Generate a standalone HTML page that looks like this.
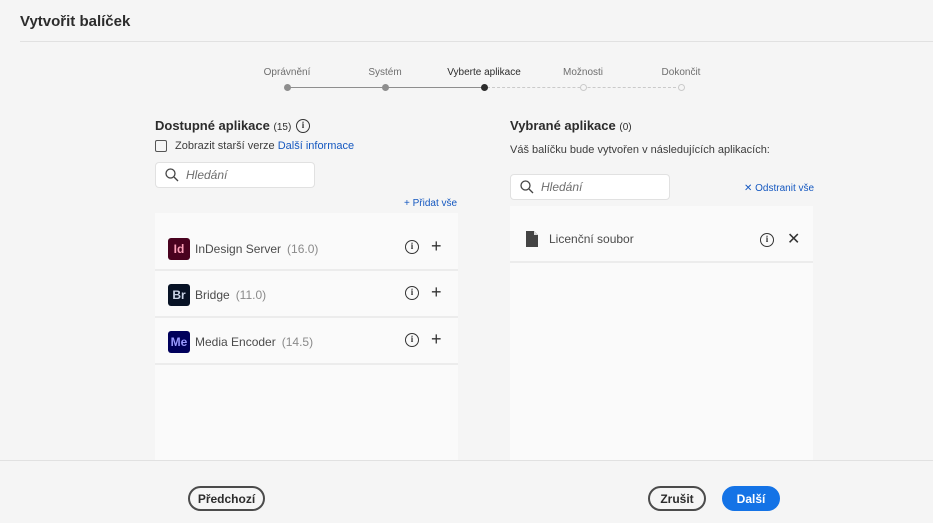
<!DOCTYPE html>
<html><head><meta charset="utf-8"><style>
*{box-sizing:border-box;margin:0;padding:0}
body{width:933px;height:523px;background:#f5f5f5;font-family:"Liberation Sans",sans-serif;color:#2c2c2c;position:relative;overflow:hidden}
.abs{position:absolute}
.t{font-size:15px;font-weight:bold;left:20px;top:13px}
.hl{left:20px;right:0;top:41px;height:1px;background:#e1e1e1}
.step{font-size:10px;color:#6e6e6e;top:67px;transform:translateX(-50%)}
.dot{width:7px;height:7px;border-radius:50%;top:84px;background:#8e8e8e}
.odot{width:7px;height:7px;border-radius:50%;top:84px;border:1px solid #cacaca;background:#f5f5f5}
.h2{font-size:13px;font-weight:bold}
.h2 span{font-weight:normal;font-size:10px}
.search{background:#fff;border:1px solid #e1e1e1;border-radius:4px;height:26px;font-style:italic;font-size:12px;color:#6e6e6e;padding-left:30px;line-height:24px}
.search svg{position:absolute;left:9px;top:5px}
.panel{background:#fafafa}
.row{position:absolute;left:0;right:0;height:46px;border-bottom:2px solid #ececec;font-size:12px;color:#4b4b4b}
.ic{position:absolute;left:13px;top:13px;width:22px;height:22px;border-radius:3px;font-weight:bold;font-size:12px;line-height:22px;text-align:center}
.nm{position:absolute;left:40px;top:17px}
.nm span{color:#8a8a8a;margin-left:6px}
.info{position:absolute;width:14px;height:14px;border:1.3px solid #333;border-radius:50%;font-size:9px;font-weight:bold;text-align:center;line-height:11px;color:#333;font-family:"Liberation Serif",serif}
.plus{position:absolute;font-size:18px;color:#333}
.link{color:#1558c0;font-size:10px}
.btn{position:absolute;top:486px;height:25px;border-radius:13px;font-size:12px;font-weight:bold;text-align:center;line-height:22px;border:2px solid #4b4b4b;color:#2c2c2c}
</style></head><body>
<div class="abs t">Vytvořit balíček</div>
<div class="abs hl"></div>
<div class="abs step" style="left:287px">Oprávnění</div>
<div class="abs step" style="left:385px">Systém</div>
<div class="abs step" style="left:484px;color:#2c2c2c">Vyberte aplikace</div>
<div class="abs step" style="left:583px">Možnosti</div>
<div class="abs step" style="left:681px">Dokončit</div>
<div class="abs" style="left:290px;top:87px;width:194px;height:1px;background:#8e8e8e"></div>
<div class="abs" style="left:487px;top:87px;width:194px;border-top:1px dashed #cacaca"></div>
<div class="abs dot" style="left:284px"></div>
<div class="abs dot" style="left:382px"></div>
<div class="abs dot" style="left:481px;background:#2c2c2c"></div>
<div class="abs odot" style="left:580px"></div>
<div class="abs odot" style="left:678px"></div>

<div class="abs h2" style="left:155px;top:118px">Dostupné aplikace <span>(15)</span></div>
<div class="abs info" style="left:296px;top:119px">i</div>
<div class="abs" style="left:155px;top:140px;width:12px;height:12px;border:1.5px solid #555;border-radius:2px"></div>
<div class="abs" style="left:175px;top:140px;font-size:11px;color:#3c3c3c">Zobrazit starší verze <span class="link" style="font-size:11px">Další informace</span></div>
<div class="abs search" style="left:155px;top:162px;width:160px">Hledání<svg width="14" height="14" viewBox="0 0 14 14"><circle cx="5.5" cy="5.5" r="4.5" fill="none" stroke="#444" stroke-width="1.3"/><path d="M9 9l4 4" stroke="#444" stroke-width="1.3"/></svg></div>
<div class="abs link" style="left:404px;top:198px">+ Přidat vše</div>
<div class="abs panel" style="left:155px;top:213px;width:303px;height:247px">
 <div class="row" style="top:12px;height:46px"><div class="ic" style="background:#49021f;color:#fc9fb8">Id</div><div class="nm">InDesign Server<span>(16.0)</span></div><div class="info" style="left:250px;top:15px">i</div><div class="plus" style="left:276px;top:11px">+</div></div>
 <div class="row" style="top:58px;height:47px"><div class="ic" style="background:#071225;color:#c9d3e6">Br</div><div class="nm">Bridge<span>(11.0)</span></div><div class="info" style="left:250px;top:15px">i</div><div class="plus" style="left:276px;top:11px">+</div></div>
 <div class="row" style="top:105px;height:47px"><div class="ic" style="background:#00005b;color:#9999ff">Me</div><div class="nm">Media Encoder<span>(14.5)</span></div><div class="info" style="left:250px;top:15px">i</div><div class="plus" style="left:276px;top:11px">+</div></div>
</div>

<div class="abs h2" style="left:510px;top:118px">Vybrané aplikace <span>(0)</span></div>
<div class="abs" style="left:510px;top:144px;font-size:11px;color:#3c3c3c">Váš balíčku bude vytvořen v následujících aplikacích:</div>
<div class="abs search" style="left:510px;top:174px;width:160px">Hledání<svg width="14" height="14" viewBox="0 0 14 14"><circle cx="5.5" cy="5.5" r="4.5" fill="none" stroke="#444" stroke-width="1.3"/><path d="M9 9l4 4" stroke="#444" stroke-width="1.3"/></svg></div>
<div class="abs link" style="left:744px;top:183px">✕ Odstranit vše</div>
<div class="abs panel" style="left:510px;top:206px;width:303px;height:254px">
 <div class="row" style="top:10px;height:47px"><svg style="position:absolute;left:16px;top:15px" width="12" height="16" viewBox="0 0 12 16"><path d="M0 0h8l4 4v12H0z" fill="#444"/><path d="M8 0v4h4" fill="#ddd"/></svg><div class="nm" style="left:39px;top:16px">Licenční soubor</div><div class="info" style="left:250px;top:17px">i</div><div class="plus" style="left:277px;top:13px;font-size:16px">✕</div></div>
</div>

<div class="abs" style="left:0;right:0;top:460px;height:1px;background:#e1e1e1"></div>
<div class="btn" style="left:188px;width:77px">Předchozí</div>
<div class="btn" style="left:648px;width:58px">Zrušit</div>
<div class="btn" style="left:722px;width:58px;background:#1473e6;border-color:#1473e6;color:#fff">Další</div>
</body></html>
